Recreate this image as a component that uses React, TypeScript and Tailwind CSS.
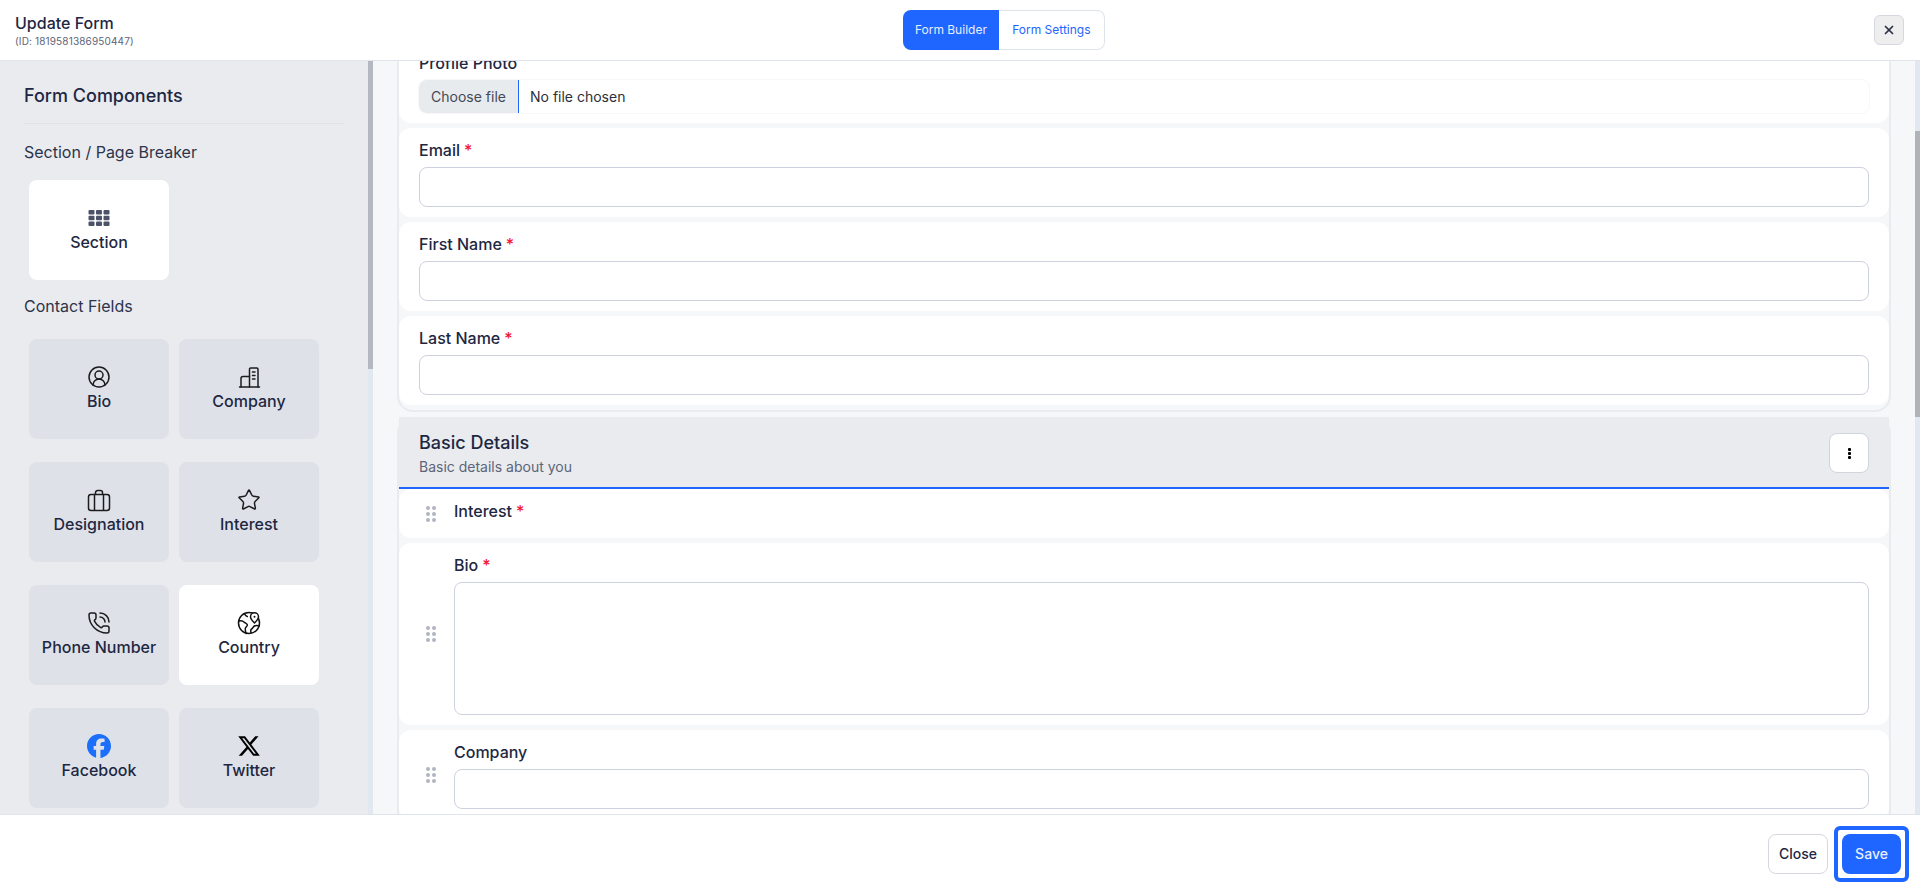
import * as React from "react";
import { CircleUserRound, PhoneCall, Star, X } from "lucide-react";
import { FaFacebook, FaXTwitter } from "react-icons/fa6";

// Icons that the packages don't carry in the right shape
function GridIcon() {
  const cells = [4, 9.8, 15.6].flatMap((y) => [1.5, 9, 16.5].map((x) => ({ x, y })));
  return (
    <svg viewBox="0 0 24 24" className="h-6 w-6 text-[#4c5268]" fill="currentColor">
      {cells.map((c) => (
        <rect key={`${c.x}-${c.y}`} x={c.x} y={c.y} width="6" height="4.4" rx="1" />
      ))}
    </svg>
  );
}

function BuildingIcon() {
  return (
    <svg viewBox="0 0 24 24" className="h-6 w-6 text-[#1c1c1f]" fill="none" stroke="currentColor" strokeWidth="1.5" strokeLinecap="round" strokeLinejoin="round">
      <path d="M2.5 22h20" />
      <path d="M12.5 22V4.2c0-.7.5-1.2 1.2-1.2h6.1c.7 0 1.2.5 1.2 1.2V22" />
      <path d="M12.5 11.5H6c-1 0-2 .8-2 1.9V22" />
      <path d="M15.5 7h2.5M15.5 10.5h2.5M15.5 14h2.5" />
    </svg>
  );
}

function SuitcaseIcon() {
  return (
    <svg viewBox="0 0 24 24" className="h-6 w-6 text-[#1c1c1f]" fill="none" stroke="currentColor" strokeWidth="1.5" strokeLinejoin="round">
      <rect x="1.5" y="6.5" width="21" height="16" rx="2.5" />
      <path d="M7.5 22.5v-16M16.5 22.5v-16" />
      <path d="M8.5 6.5V4.6c0-1.2 1-2.1 2.1-2.1h2.8c1.1 0 2.1.9 2.1 2.1v1.9" />
    </svg>
  );
}

function GlobePinIcon() {
  return (
    <svg viewBox="0 0 24 24" className="h-6 w-6 text-[#111114]" fill="none" stroke="currentColor" strokeWidth="1.5" strokeLinecap="round" strokeLinejoin="round">
      <circle cx="12" cy="12" r="10.5" />
      <path d="M2 10c2.200-.6 4-.1 5.200 1.200 1 1.100 2.600 1 3.100 2.500.4 1.300-1.200 2-1.800 3.100-.5 1-.1 3.300.6 5.800" />
      <path d="M7.500 2.800c.5 1.300 1.400 2.300 2.800 2.700" />
      <path d="M22.200 15c-1.500-.6-3.400-.8-4.800 0-1.200.7-1.400 2.200-2.800 3-.9.5-1 2-.6 3.500" />
      <path d="M17.500 12c-2.400-2.300-4-4-4-6.200a4 4 0 0 1 8 0c0 2.200-1.600 3.900-4 6.200z" fill="#ffffff" />
      <circle cx="17.500" cy="5.800" r="1" fill="currentColor" stroke="none" />
    </svg>
  );
}

function DragHandle() {
  return (
    <div className="grid w-[35px] shrink-0 grid-cols-[4px_4px] content-center justify-start gap-x-[2px] gap-y-[2px] self-stretch pl-[7px]">
      {[0, 1, 2, 3, 4, 5].map((i) => (
        <span key={i} className="h-[4px] w-[4px] rounded-full bg-[#b2b5c2]" />
      ))}
    </div>
  );
}

const CONTACT_FIELDS = [
  { name: "Bio", icon: <CircleUserRound className="h-6 w-6 text-[#1c1c1f]" strokeWidth={1.5} /> },
  { name: "Company", icon: <BuildingIcon /> },
  { name: "Designation", icon: <SuitcaseIcon /> },
  { name: "Interest", icon: <Star className="h-6 w-6 text-[#1c1c1f]" strokeWidth={1.5} /> },
  { name: "Phone Number", icon: <PhoneCall className="h-6 w-6 text-[#1c1c1f]" strokeWidth={1.5} /> },
  { name: "Country", icon: <GlobePinIcon />, active: true },
  { name: "Facebook", icon: <FaFacebook className="h-6 w-6 text-[#1b6ffa]" /> },
  { name: "Twitter", icon: <FaXTwitter className="h-6 w-6 text-black" /> },
];

function ComponentCard({ name, icon, active }: { name: string; icon: React.ReactNode; active?: boolean }) {
  return (
    <div className={`flex h-[100px] w-[140px] flex-col items-center rounded-[8px] pt-[26px] ${active ? "bg-white" : "bg-[#dee2e8]"}`}>
      {icon}
      <span className="text-[16px] leading-6 font-[450] text-[#1e2742]">{name}</span>
    </div>
  );
}

function Label({ text, required }: { text: string; required?: boolean }) {
  return (
    <label className="mb-[5px] block text-[16px] leading-6 font-[450] text-[#1e2742]">
      {text}
      {required && <span className="ml-[4px] text-[#f5142d]">*</span>}
    </label>
  );
}

function TextField({ label, required }: { label: string; required?: boolean }) {
  return (
    <div className="rounded-[12px] bg-white px-[20px] pt-[10px] pb-[10px]">
      <Label text={label} required={required} />
      <input type="text" className="block h-[40px] w-full rounded-[8px] border border-[#cdd2de] bg-white" />
    </div>
  );
}

function Sidebar() {
  return (
    <aside className="flex w-[373px] shrink-0 overflow-hidden bg-[#e9ebef]">
      <div className="min-w-0 flex-1 pt-[21px] pl-[24px]">
        <h2 className="text-[18px] leading-7 font-[450] text-[#1e2742]">Form Components</h2>
        <hr className="mt-[13px] mr-[24px] border-[#dfe2e9]" />
        <p className="mt-[16px] text-[16px] leading-6 text-[#2c344c]">Section / Page Breaker</p>
        <div className="mt-[16px] ml-[5px]">
          <ComponentCard name="Section" icon={<GridIcon />} active />
        </div>
        <p className="mt-[14px] text-[16px] leading-6 text-[#2c344c]">Contact Fields</p>
        <div className="mt-[21px] ml-[5px] grid grid-cols-[140px_140px] gap-x-[10px] gap-y-[23px]">
          {CONTACT_FIELDS.map((f) => (
            <ComponentCard key={f.name} name={f.name} icon={f.icon} active={f.active} />
          ))}
        </div>
      </div>
      <div className="w-[5px] shrink-0 bg-[#e2e8f0]">
        <div className="h-[308px] bg-[#b4b8c0]" />
      </div>
    </aside>
  );
}

function FormArea() {
  return (
    <main className="flex min-w-0 flex-1 overflow-hidden bg-[#f6f7f9]">
      <div className="min-w-0 flex-1 px-[24px]">
        <div className="mt-[-20px] flex flex-col gap-[5px]">
          {/* Contact section, scrolled so its top is cut off */}
          <section className="flex flex-col gap-[5px] rounded-b-[16px] border-x-2 border-b-2 border-[#e9ebef] pb-[5px]">
            <div className="rounded-[12px] bg-white px-[20px] pt-[10px] pb-[10px]">
              <Label text="Profile Photo" />
              <div className="flex h-[33px] items-center rounded-[8px] bg-white text-[14px] shadow-[0_0_0_1px_#f7f7f9]">
                <button className="h-full w-[100px] rounded-l-[8px] border-r border-[#1f65ff] bg-[#e8ebee] text-[#444a55]">Choose file</button>
                <span className="ml-[11px] text-[#2b2f3a]">No file chosen</span>
              </div>
            </div>
            <TextField label="Email" required />
            <TextField label="First Name" required />
            <TextField label="Last Name" required />
          </section>

          <section className="flex flex-col gap-[5px] rounded-t-[16px] border-x-2 border-[#e9ebef]">
            <div className="flex h-[72px] items-center justify-between border-b-2 border-[#1f65ff] bg-[#e9ebef] px-[20px] pt-[2px]">
              <div>
                <h3 className="text-[18px] leading-7 font-[450] text-[#1e2742]">Basic Details</h3>
                <p className="text-[14px] leading-5 text-[#5d6478]">Basic details about you</p>
              </div>
              <button className="flex h-[40px] w-[40px] flex-col items-center justify-center gap-[1px] rounded-[8px] border border-[#d0d4dd] bg-white">
                <span className="h-[3px] w-[3px] rounded-[1px] bg-black" />
                <span className="h-[3px] w-[3px] rounded-[1px] bg-black" />
                <span className="h-[3px] w-[3px] rounded-[1px] bg-black" />
              </button>
            </div>

            <div className="-mt-[5px] flex h-[49px] rounded-[12px] bg-white pl-[20px]">
              <DragHandle />
              <div className="pt-[10px]">
                <Label text="Interest" required />
              </div>
            </div>

            <div className="flex rounded-[12px] bg-white px-[20px] pt-[10px] pb-[10px]">
              <DragHandle />
              <div className="min-w-0 flex-1">
                <Label text="Bio" required />
                <textarea className="block h-[133px] w-full resize-none rounded-[8px] border border-[#cdd2de] bg-white" />
              </div>
            </div>

            <div className="flex rounded-[12px] bg-white px-[20px] pt-[10px] pb-[10px]">
              <DragHandle />
              <div className="min-w-0 flex-1">
                <Label text="Company" />
                <input type="text" className="block h-[40px] w-full rounded-[8px] border border-[#cdd2de] bg-white" />
              </div>
            </div>
          </section>
        </div>
      </div>
      <div className="w-[5px] shrink-0 bg-[#e2e8f0] pt-[70px]">
        <div className="h-[286px] bg-[#b0b3b8]" />
      </div>
    </main>
  );
}

export default function App() {
  return (
    <div className="flex h-screen flex-col overflow-hidden bg-white font-[Inter,sans-serif]">
      <header className="flex h-[61px] shrink-0 items-center justify-between border-b border-[#dfe4ec] pr-[16px] pl-[15px]">
        <div className="pb-[3px]">
          <h1 className="text-[16px] leading-6 font-[450] text-[#1e2742]">Update Form</h1>
          <p className="text-[10px] leading-[12px] tracking-[0.15px] text-[#5d6478]">(ID: 1819581386950447)</p>
        </div>
        <div className="flex h-[40px] text-[12px] font-normal">
          <button className="w-[96px] rounded-l-[8px] bg-[#1f65ff] text-[#e6eeff]">Form Builder</button>
          <button className="w-[106px] rounded-r-[8px] border border-l-0 border-[#dfe4ec] bg-white text-[#1f65ff]">Form Settings</button>
        </div>
        <button className="flex h-[30px] w-[30px] items-center justify-center rounded-[6px] border border-[#d5d8e0] bg-[#eeeeee] text-[#2c3044]">
          <X className="h-[14px] w-[14px]" strokeWidth={3} />
        </button>
      </header>

      <div className="flex min-h-0 flex-1">
        <Sidebar />
        <FormArea />
      </div>

      <footer className="flex h-[78px] shrink-0 items-center justify-end gap-[14px] border-t border-[#dfe4ec] pr-[19px]">
        <button className="h-[40px] w-[60px] rounded-[8px] border border-[#d5d8e0] bg-white text-[14px] font-[450] text-[#1e2742]">Close</button>
        {/* focus ring around Save, pulled out so it doesn't push the buttons apart */}
        <div className="-m-[8px] rounded-[6px] border-4 border-[#1f65ff] p-[4px]">
          <button className="block h-[40px] w-[59px] rounded-[8px] bg-[#1f65ff] text-[14px] font-[450] text-[#e6eeff]">Save</button>
        </div>
      </footer>
    </div>
  );
}
